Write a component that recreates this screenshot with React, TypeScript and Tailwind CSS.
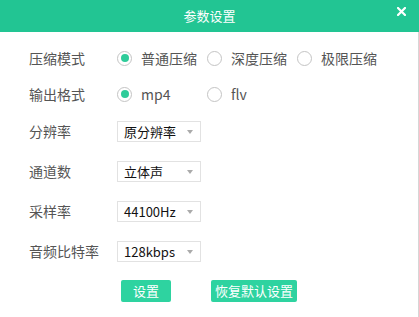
const font = { fontFamily: '"Microsoft YaHei", "Noto Sans CJK SC", "Liberation Sans", sans-serif' };

type RadioOption = { label: string; checked?: boolean };

function Radio({ label, checked }: RadioOption) {
  return (
    <span className="flex items-center">
      <span className="flex h-[15px] w-[15px] items-center justify-center rounded-full border border-[#c4c4c4] bg-white">
        {checked && <span className="h-[8px] w-[8px] rounded-full bg-[#2ecc9a]" />}
      </span>
      <span className="ml-[9px] text-[14px] text-[#555]">{label}</span>
    </span>
  );
}

function Select({ value }: { value: string }) {
  return (
    <div className="flex h-[21px] w-[84px] items-center justify-between border border-[#e2e2e2] bg-white pl-[6px] pr-[7px] text-[13px] text-[#111]">
      <span>{value}</span>
      <span className="h-0 w-0 border-x-[3px] border-t-[4px] border-x-transparent border-t-[#aaa]" />
    </div>
  );
}

function Row({ label, children, className }: { label: string; children: React.ReactNode; className: string }) {
  return (
    <div className={`flex items-center ${className}`}>
      <span className="w-[117px] shrink-0 whitespace-nowrap pl-[29px] text-[14px] text-[#555]">{label}</span>
      {children}
    </div>
  );
}

export default function App() {
  return (
    <div className="h-[317px] w-[419px] bg-white" style={font}>
      <div className="relative flex h-[32px] items-center justify-center bg-[#22c593]">
        <span className="text-[13px] text-white">参数设置</span>
        <svg className="absolute left-[397px] top-[7px] h-[9px] w-[9px]" viewBox="0 0 9 9" fill="none" stroke="white" strokeWidth="2.2" strokeLinecap="square">
          <path d="M1 1l7 7M8 1l-7 7" />
        </svg>
      </div>
      <div className="h-[285px] border-r border-[#d6d6d6] pt-[16px]">
        <Row label="压缩模式" className="h-[20px]">
          <span className="w-[90px]"><Radio label="普通压缩" checked /></span>
          <span className="w-[90px]"><Radio label="深度压缩" /></span>
          <Radio label="极限压缩" />
        </Row>
        <Row label="输出格式" className="mt-[16px] h-[20px]">
          <span className="w-[90px]"><Radio label="mp4" checked /></span>
          <Radio label="flv" />
        </Row>
        <Row label="分辨率" className="mt-[17px] h-[21px]">
          <Select value="原分辨率" />
        </Row>
        <Row label="通道数" className="mt-[19px] h-[21px]">
          <Select value="立体声" />
        </Row>
        <Row label="采样率" className="mt-[19px] h-[21px]">
          <Select value="44100Hz" />
        </Row>
        <Row label="音频比特率" className="mt-[19px] h-[21px]">
          <Select value="128kbps" />
        </Row>
        <div className="mt-[18px] flex">
          <button className="ml-[121px] flex h-[22px] w-[50px] items-center justify-center rounded-[2px] bg-[#2ed3a0] text-[13px] text-white">设置</button>
          <button className="ml-[40px] flex h-[22px] w-[86px] items-center justify-center rounded-[2px] bg-[#2ed3a0] text-[13px] text-white">恢复默认设置</button>
        </div>
      </div>
    </div>
  );
}
